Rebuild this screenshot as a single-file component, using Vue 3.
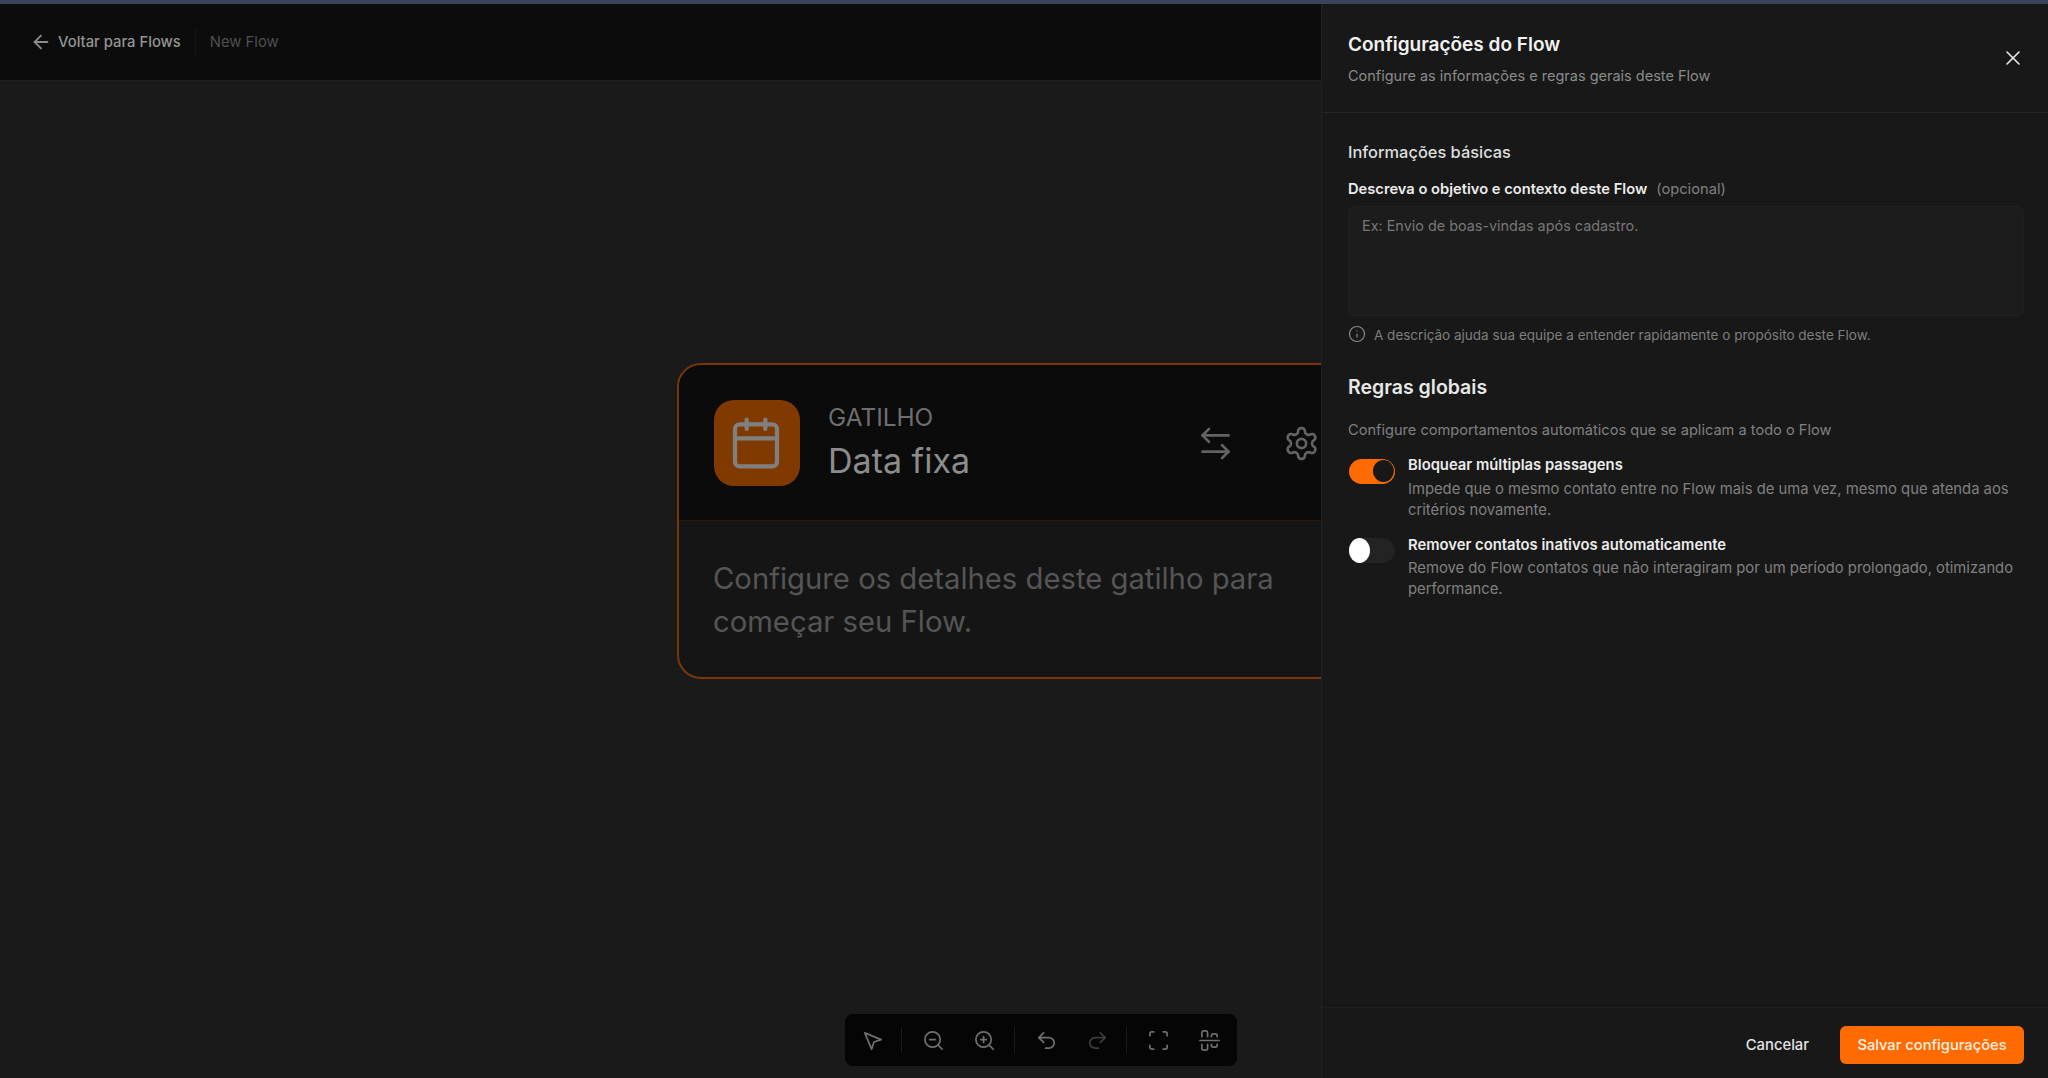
<script setup>
const tools = [
  { id: 'cursor', c: '#6f6f6f', sep: true, d: ['m4 4 7.07 17 2.51-7.39L21 11.07z'] },
  { id: 'out', c: '#6f6f6f', circle: true, d: ['m21 21-4.3-4.3', 'M8 11h6'] },
  { id: 'in', c: '#6f6f6f', circle: true, sep: true, d: ['m21 21-4.3-4.3', 'M11 8v6', 'M8 11h6'] },
  { id: 'undo', c: '#6f6f6f', d: ['M9 14 4 9l5-5', 'M4 9h10.5a5.5 5.5 0 0 1 5.5 5.5a5.5 5.5 0 0 1-5.5 5.5H11'] },
  { id: 'redo', c: '#3d3d3d', sep: true, d: ['m15 14 5-5-5-5', 'M20 9H9.5A5.5 5.5 0 0 0 4 14.5A5.5 5.5 0 0 0 9.5 20H13'] },
  { id: 'scan', c: '#6f6f6f', d: ['M3 7V5a2 2 0 0 1 2-2h2', 'M17 3h2a2 2 0 0 1 2 2v2', 'M21 17v2a2 2 0 0 1-2 2h-2', 'M7 21H5a2 2 0 0 1-2-2v-2'] },
  { id: 'align', c: '#6f6f6f', d: ['M2 12h20', 'M10 16v4a2 2 0 0 1-2 2H6a2 2 0 0 1-2-2v-4', 'M10 8V4a2 2 0 0 0-2-2H6a2 2 0 0 0-2 2v4', 'M20 16v1a2 2 0 0 1-2 2h-2a2 2 0 0 1-2-2v-1', 'M14 8V7c0-1.1.9-2 2-2h2a2 2 0 0 1 2 2v1'] }
]
const gear = 'M12.22 2h-.44a2 2 0 0 0-2 2v.18a2 2 0 0 1-1 1.73l-.43.25a2 2 0 0 1-2 0l-.15-.08a2 2 0 0 0-2.73.73l-.22.38a2 2 0 0 0 .73 2.73l.15.1a2 2 0 0 1 1 1.72v.51a2 2 0 0 1-1 1.74l-.15.09a2 2 0 0 0-.73 2.73l.22.38a2 2 0 0 0 2.73.73l.15-.08a2 2 0 0 1 2 0l.43.25a2 2 0 0 1 1 1.73V20a2 2 0 0 0 2 2h.44a2 2 0 0 0 2-2v-.18a2 2 0 0 1 1-1.73l.43-.25a2 2 0 0 1 2 0l.15.08a2 2 0 0 0 2.73-.73l.22-.39a2 2 0 0 0-.73-2.73l-.15-.08a2 2 0 0 1-1-1.74v-.5a2 2 0 0 1 1-1.74l.15-.09a2 2 0 0 0 .73-2.73l-.22-.38a2 2 0 0 0-2.73-.73l-.15.08a2 2 0 0 1-2 0l-.43-.25a2 2 0 0 1-1-1.73V4a2 2 0 0 0-2-2z'
const rules = [
  { on: true, title: 'Bloquear múltiplas passagens', text: 'Impede que o mesmo contato entre no Flow mais de uma vez, mesmo que atenda aos critérios novamente.' },
  { on: false, title: 'Remover contatos inativos automaticamente', text: 'Remove do Flow contatos que não interagiram por um período prolongado, otimizando performance.' }
]
</script>

<template>
  <div class="page">
    <div class="strip"></div>
    <header class="topbar">
      <svg class="back" viewBox="0 0 24 24"><path d="m12 19-7-7 7-7" /><path d="M19 12H5" /></svg>
      <span class="back-label">Voltar para Flows</span>
      <span class="bar-sep"></span>
      <span class="flow-name">New Flow</span>
    </header>
    <main class="canvas">
      <section class="node">
        <div class="node-head">
          <div class="node-icon">
            <svg viewBox="0 0 24 24"><path d="M8 2v4" /><path d="M16 2v4" /><rect x="3" y="4" width="18" height="18" rx="2" /><path d="M3 10h18" /></svg>
          </div>
          <div class="node-titles">
            <div class="node-kind">GATILHO</div>
            <div class="node-name">Data fixa</div>
          </div>
          <svg class="swap" viewBox="0 0 24 24"><path d="M8 3 4 7l4 4" /><path d="M4 7h16" /><path d="m16 21 4-4-4-4" /><path d="M20 17H4" /></svg>
          <svg class="gear" viewBox="0 0 24 24"><path :d="gear" /><circle cx="12" cy="12" r="3" /></svg>
        </div>
        <p class="node-body">Configure os detalhes deste gatilho para<br />começar seu Flow.</p>
      </section>

      <nav class="toolbar">
        <template v-for="t in tools" :key="t.id">
          <span class="tool">
            <svg viewBox="0 0 24 24" :style="{ stroke: t.c }">
              <circle v-if="t.circle" cx="11" cy="11" r="8" />
              <path v-for="p in t.d" :key="p" :d="p" />
            </svg>
          </span>
          <span v-if="t.sep" class="tool-sep"></span>
        </template>
      </nav>
    </main>

    <aside class="panel">
      <div class="panel-head">
        <div>
          <h1>Configurações do Flow</h1>
          <p>Configure as informações e regras gerais deste Flow</p>
        </div>
        <svg class="close" viewBox="0 0 24 24"><path d="M18 6 6 18" /><path d="m6 6 12 12" /></svg>
      </div>
      <div class="panel-body">
        <h2>Informações básicas</h2>
        <div class="field-label"><strong>Descreva o objetivo e contexto deste Flow</strong><span>(opcional)</span></div>
        <div class="textarea">Ex: Envio de boas-vindas após cadastro.</div>
        <div class="hint">
          <svg viewBox="0 0 24 24"><circle cx="12" cy="12" r="10" /><path d="M12 16v-4" /><path d="M12 8h.01" /></svg>
          <span>A descrição ajuda sua equipe a entender rapidamente o propósito deste Flow.</span>
        </div>
        <h3>Regras globais</h3>
        <p class="rules-intro">Configure comportamentos automáticos que se aplicam a todo o Flow</p>
        <div v-for="r in rules" :key="r.title" class="rule">
          <span class="toggle" :class="{ on: r.on }"><span class="knob"></span></span>
          <div class="rule-text">
            <strong>{{ r.title }}</strong>
            <p>{{ r.text }}</p>
          </div>
        </div>
      </div>
      <div class="panel-foot">
        <span class="cancel">Cancelar</span>
        <span class="save">Salvar configurações</span>
      </div>
    </aside>
  </div>
</template>

<style>
html, body { margin: 0; background: #1a1a1a; }
</style>

<style scoped>
.page {
  position: relative;
  width: 2048px;
  height: 1078px;
  overflow: hidden;
  display: flex;
  flex-direction: column;
  background: #1a1a1a;
  font-family: Inter, "Liberation Sans", sans-serif;
}
svg { fill: none; stroke-width: 2; stroke-linecap: round; stroke-linejoin: round; flex: none; }
h1, h2, h3, p { margin: 0; }

.strip { height: 4px; background: #3a445c; flex: none; }
.topbar {
  height: 76px;
  flex: none;
  display: flex;
  align-items: center;
  padding-left: 30px;
  background: #0c0c0c;
  border-bottom: 1px solid #1f1f21;
  box-sizing: content-box;
}
.back { width: 22px; height: 22px; stroke: #8a8a8a; }
.back-label { margin-left: 6px; font-size: 14.8px; font-weight: 500; color: #949494; }
.bar-sep { width: 1px; height: 26px; margin: 0 14px; background: #161616; }
.flow-name { font-size: 14.8px; font-weight: 400; color: #4f4f4f; }

.canvas { position: relative; flex: 1; }
.node {
  position: absolute;
  left: 677px;
  top: 282px;
  width: 760px;
  height: 316px;
  box-sizing: border-box;
  border: 2px solid #7a3608;
  border-radius: 24px;
  background: #151515;
  overflow: hidden;
}
.node-head {
  height: 156px;
  box-sizing: border-box;
  display: flex;
  align-items: center;
  padding: 1px 0 0 35px;
  background: #0b0b0b;
  border-bottom: 1px solid #2a1a0e;
}
.node-icon {
  width: 86px;
  height: 86px;
  flex: none;
  display: flex;
  align-items: center;
  justify-content: center;
  border-radius: 20px;
  background: #803a00;
}
.node-icon svg { width: 56px; height: 56px; stroke: #808080; stroke-width: 1.8; margin-left: -2px; }
.node-titles { margin: 0 0 3px 28px; width: 368px; flex: none; }
.node-kind { font-size: 24.4px; line-height: 30px; color: #6e6e6e; }
.node-name { margin-top: 9px; font-size: 34px; line-height: 40px; font-weight: 400; color: #8c8c8c; }
.swap { width: 39px; height: 39px; stroke: #636363; stroke-width: 1.7; }
.gear { width: 37px; height: 37px; stroke: #636363; stroke-width: 1.7; margin-left: 48px; }
.node-body {
  padding: 36px 0 0 34px;
  font-size: 29.25px;
  line-height: 43px;
  color: #555;
}

.toolbar {
  position: absolute;
  left: 845px;
  top: 933px;
  width: 392px;
  height: 52px;
  box-sizing: border-box;
  display: flex;
  align-items: center;
  padding-left: 1.5px;
  background: #050505;
  border-radius: 8px;
}
.tool { width: 51px; display: flex; justify-content: center; flex: none; }
.tool svg { width: 23px; height: 23px; stroke-width: 1.8; }
.tool-sep { width: 1px; height: 26px; background: #1a1a1a; margin: 0 6px 0 3.5px; flex: none; }

.panel {
  position: absolute;
  right: 0;
  top: 4px;
  bottom: 0;
  width: 727px;
  box-sizing: border-box;
  display: flex;
  flex-direction: column;
  background: #181818;
  border-left: 1px solid #222;
}
.panel-head {
  height: 109px;
  flex: none;
  box-sizing: border-box;
  display: flex;
  justify-content: space-between;
  padding: 29px 23px 0 26px;
  border-bottom: 1px solid #252525;
}
.panel-head h1 { font-size: 19px; line-height: 24px; font-weight: 600; color: #f2f2f2; }
.panel-head p { margin-top: 9px; font-size: 14.5px; line-height: 20px; color: #8b8b8b; }
.close { width: 24px; height: 24px; stroke: #e8e8e8; stroke-width: 1.6; margin-top: 13px; }
.panel-body { flex: 1; padding: 27px 24px 0 26px; }
h2 { font-size: 16.4px; line-height: 24px; font-weight: 500; color: #dedede; }
.field-label { margin-top: 15px; font-size: 14.7px; line-height: 20px; display: flex; gap: 9px; }
.field-label strong { font-weight: 600; color: #ececec; }
.field-label span { color: #808080; }
.textarea {
  margin-top: 7px;
  height: 110px;
  box-sizing: border-box;
  padding: 9px 13px;
  background: #1c1c1c;
  border: 1px solid #202020;
  border-radius: 6px;
  font-size: 14.4px;
  line-height: 20px;
  color: #777;
}
.hint { margin-top: 9px; display: flex; align-items: center; font-size: 13.5px; line-height: 20px; color: #7e7e7e; }
.hint svg { width: 18px; height: 18px; stroke: #8a8a8a; stroke-width: 1.6; margin: -2px 8px 0 0; }
h3 { margin-top: 30px; font-size: 19.5px; line-height: 24px; font-weight: 600; color: #e8e8e8; }
.rules-intro { margin-top: 21px; font-size: 14.6px; line-height: 20px; color: #808080; }
.rule { display: flex; gap: 13px; margin-top: 13.4px; padding-left: 1px; }
.rules-intro + .rule { margin-top: 15.4px; }
.toggle {
  width: 46px;
  height: 25px;
  margin-top: 3.6px;
  flex: none;
  box-sizing: border-box;
  border-radius: 13px;
  background: #232323;
  display: flex;
  align-items: center;
}
.knob { width: 21px; height: 25px; border-radius: 50%; background: #fff; }
.toggle.on { background: #ff6b00; justify-content: flex-end; padding-right: 1px; }
.toggle.on .knob { width: 21px; height: 22px; background: #181818; }
.rule-text strong { display: block; font-size: 14.8px; line-height: 20px; font-weight: 600; color: #ececec; }
.rule-text p { margin-top: 3.3px; font-size: 14.8px; line-height: 21.3px; color: #808080; }
.panel-foot {
  height: 71px;
  flex: none;
  box-sizing: border-box;
  display: flex;
  align-items: flex-start;
  justify-content: flex-end;
  padding: 18px 24px 0 0;
  border-top: 1px solid #1f1f1f;
}
.cancel { margin: 10px 31px 0 0; font-size: 14.8px; line-height: 18px; font-weight: 500; color: #e4e4e4; }
.save {
  width: 184px;
  height: 38px;
  display: flex;
  align-items: center;
  justify-content: center;
  border-radius: 6px;
  background: #ff6b00;
  font-size: 14.7px;
  font-weight: 500;
  color: #fff1e6;
}
</style>
